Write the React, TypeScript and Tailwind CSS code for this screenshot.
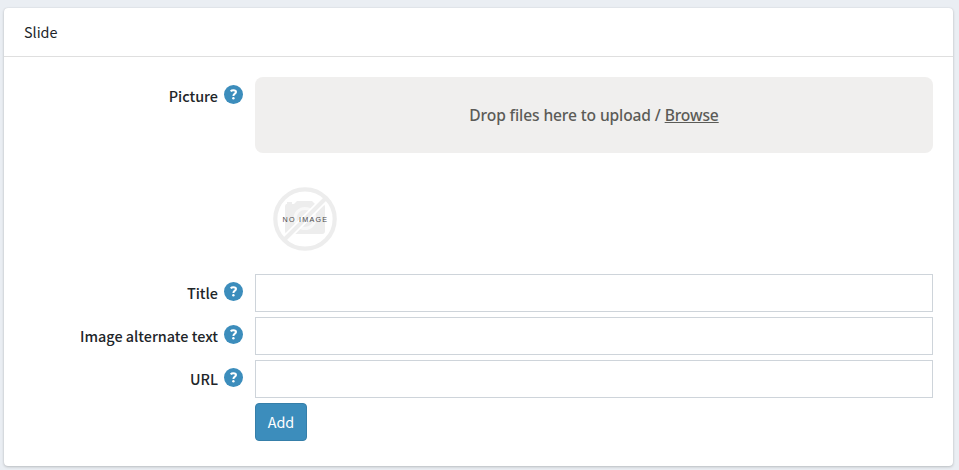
function HelpIcon() {
  return (
    <svg viewBox="0 0 19 19" className="mt-2 size-[19px] shrink-0">
      <circle cx="9.5" cy="9.5" r="9.5" fill="#3c8dbc" />
      <path d="M6.7 6.3C7.3 5.6 8.2 5.3 9.4 5.3c1.6 0 2.6.6 2.6 1.8 0 1.6-2.6 1.5-2.6 3.8" fill="none" stroke="#fff" strokeWidth="2" />
      <circle cx="9.4" cy="13.3" r="1.2" fill="#fff" />
    </svg>
  );
}

function FieldLabel({ text }: { text: string }) {
  return (
    <div className="flex h-[38px] w-[251px] shrink-0 justify-end gap-1.5 pr-3">
      <label className="whitespace-nowrap pt-[7px] text-right text-[14.4px] font-medium leading-6 text-[#212529]">
        {text}
      </label>
      <HelpIcon />
    </div>
  );
}

function TextRow({ text }: { text: string }) {
  return (
    <div className="flex">
      <FieldLabel text={text} />
      <input aria-label={text} className="h-[38px] min-w-0 flex-1 border border-[#ced4da] bg-white px-3 outline-none" />
    </div>
  );
}

function NoImage() {
  return (
    <svg width="64" height="64" viewBox="0 0 64 64" className="block">
      <path
        fill="#ededed"
        d="M13 17h1v-2h5v2h2l3-3h15l3 3h7q3 0 3 3v24q0 3-3 3H15q-3 0-3-3V20q0-2 1-3Z"
      />
      <circle cx="32" cy="31.5" r="10" fill="none" stroke="#f8f8f8" strokeWidth="3" />
      <path d="M10 54 54 10" stroke="#fff" strokeWidth="7.5" />
      <circle cx="32" cy="32" r="29.7" fill="none" stroke="#ededed" strokeWidth="4.2" />
      <path d="M11.5 52.5 52.5 11.5" stroke="#ededed" strokeWidth="4" />
      <text x="9.5" y="35" fill="#4c4c4c" fontSize="7.2" textLength="44.5" className="font-['Liberation_Sans',sans-serif]">
        NO IMAGE
      </text>
    </svg>
  );
}

export default function App() {
  return (
    <div className="h-[470px] bg-[#eaeef3] pl-1 pr-1.5 pt-2 font-['Noto_Sans_CJK_SC',sans-serif]">
      <section className="h-[458px] rounded bg-white shadow-[0_0_1px_rgba(0,0,0,0.13),0_1px_3px_rgba(0,0,0,0.2)]">
        <header className="h-[49px] border-b border-[#dfdfdf] px-5 pt-3 text-[14.4px] leading-6 text-[#212529]">
          Slide
        </header>
        <div className="pr-5 pt-5">
          <div className="flex">
            <FieldLabel text="Picture" />
            <div className="flex-1">
              <div className="flex h-[76px] items-center justify-center rounded-lg bg-[#f0efee] pt-0.5 font-['Noto_Sans',sans-serif] text-[15.6px] font-medium tracking-[-0.13px] text-[#5b5b57]">
                <span className="whitespace-pre">Drop files here to upload / <span className="underline">Browse</span></span>
              </div>
              <div className="ml-[18px] mt-[34px]">
                <NoImage />
              </div>
            </div>
          </div>
          <div className="mt-[23px] flex flex-col gap-[5px]">
            <TextRow text="Title" />
            <TextRow text="Image alternate text" />
            <TextRow text="URL" />
            <button className="ml-[251px] block h-[38px] w-[52px] rounded border border-[#367fa9] bg-[#3c8dbc] text-[14.4px] text-white">
              Add
            </button>
          </div>
        </div>
      </section>
    </div>
  );
}
